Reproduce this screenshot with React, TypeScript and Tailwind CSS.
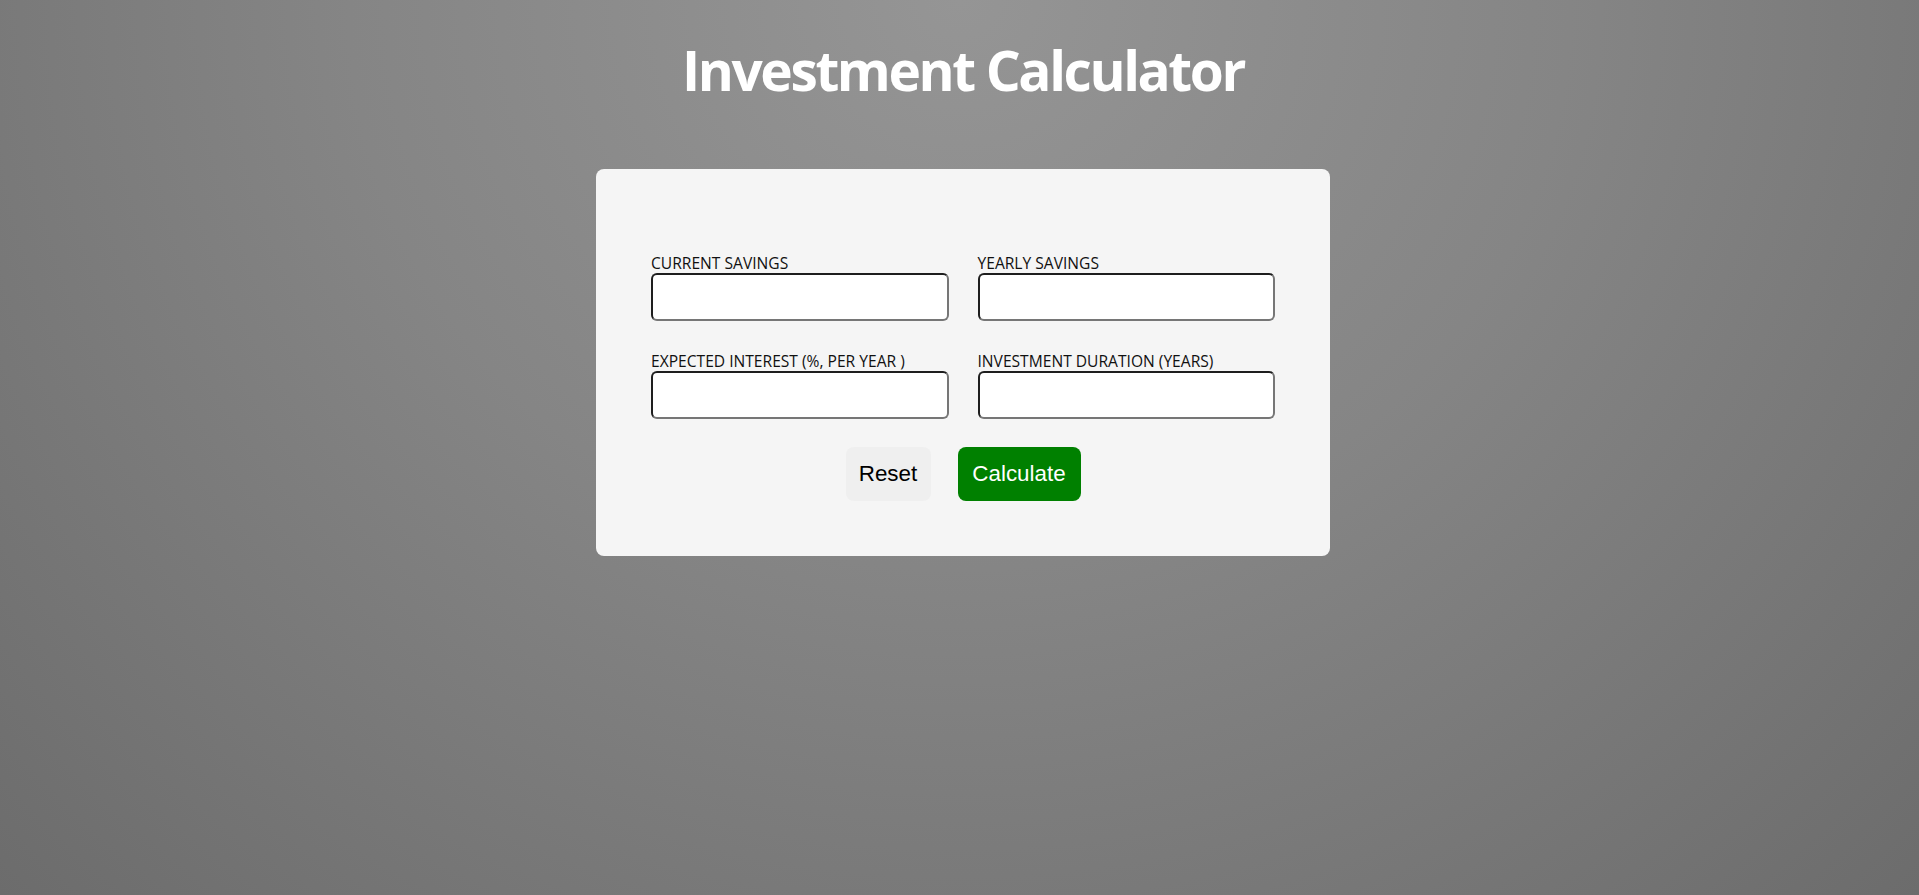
const fields = [
  { id: 'current-savings', label: 'CURRENT SAVINGS' },
  { id: 'yearly-savings', label: 'YEARLY SAVINGS' },
  { id: 'expected-interest', label: 'EXPECTED INTEREST (%, PER YEAR )' },
  { id: 'duration', label: 'INVESTMENT DURATION (YEARS)' },
];

export default function App() {
  return (
    <div className="min-h-screen bg-[radial-gradient(ellipse_at_50%_0%,#959595_0%,#858585_45%,#6c6c6c_100%)] pl-[7px] font-['Open_Sans','Noto_Sans',sans-serif]">
      <h1 className="pt-[37px] text-center text-[55px] leading-[66px] font-bold tracking-[-2.4px] text-white">
        Investment Calculator
      </h1>

      <form
        className="mx-auto mt-[66px] w-[734px] rounded-lg bg-[#f5f5f5] px-[55px] pt-[84px] pb-[55px]"
        onSubmit={(e) => e.preventDefault()}
      >
        <div className="grid grid-cols-2 gap-x-[29px] gap-y-[30px]">
          {fields.map((f) => (
            <div key={f.id}>
              <label htmlFor={f.id} className="block text-[15.6px] leading-[20px] text-[#111]">
                {f.label}
              </label>
              <input
                id={f.id}
                type="number"
                className="block h-[48px] w-full rounded-md border-2 border-t-[#1e1e1e] border-l-[#1e1e1e] border-r-[#767676] border-b-[#767676] bg-white px-2 text-base outline-none"
              />
            </div>
          ))}
        </div>

        {/* Actions */}
        <div className="mt-[28px] flex justify-center gap-[27px] font-['Liberation_Sans',Arial,sans-serif] text-[22.4px]">
          <button type="reset" className="h-[54px] w-[85px] rounded-lg bg-[#efefef] text-black">
            Reset
          </button>
          <button type="submit" className="h-[54px] w-[123px] rounded-lg bg-[#008000] text-white">
            Calculate
          </button>
        </div>
      </form>
    </div>
  );
}
